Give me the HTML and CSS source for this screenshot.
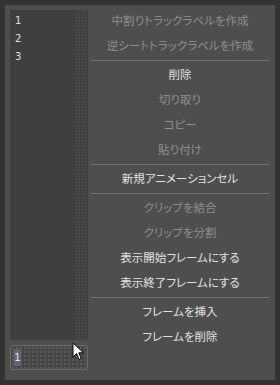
FILE: index.html
```html
<!DOCTYPE html>
<html>
<head>
    <title>Context menu</title>
    <link rel="stylesheet" href="styles.css">
</head>
<body>
    <div class="menu">
        <div class="side">
            <div class="list">
                <div class="rows">
                    <div class="row">1</div>
                    <div class="row">2</div>
                    <div class="row">3</div>
                </div>
                <div class="scroll"></div>
            </div>
            <div class="field">
                <span class="field-val">1</span>
            </div>
        </div>

        <div class="items">
            <div class="item off">中割りトラックラベルを作成</div>
            <div class="item off">逆シートトラックラベルを作成</div>
            <div class="sep"></div>
            <div class="item">削除</div>
            <div class="item off">切り取り</div>
            <div class="item off">コピー</div>
            <div class="item off">貼り付け</div>
            <div class="sep"></div>
            <div class="item">新規アニメーションセル</div>
            <div class="sep"></div>
            <div class="item off">クリップを結合</div>
            <div class="item off">クリップを分割</div>
            <div class="item">表示開始フレームにする</div>
            <div class="item">表示終了フレームにする</div>
            <div class="sep"></div>
            <div class="item">フレームを挿入</div>
            <div class="item">フレームを削除</div>
        </div>

        <!-- mouse pointer -->
        <svg class="cursor" width="14" height="20" viewBox="0 0 14 20">
            <path d="M1 1 L1 15 L4.5 11.5 L7 17.5 L9.2 16.6 L6.8 10.8 L11.5 10.8 Z" fill="#fff" stroke="#000" stroke-width="1"/>
        </svg>
    </div>
</body>
</html>
```

FILE: styles.css
```css
body {
    margin: 0;
    background: #333333;
    font-family: "Noto Sans CJK JP", "DejaVu Sans", sans-serif;
}
.menu {
    position: relative;
    display: flex;
    margin: 5px 0 0 5px;
    width: 270px;
    height: 375px;
    box-sizing: border-box;
    padding: 5px 6px 10px 5px;
    background: #4e4e4e;
}
.side {
    width: 78px;
    display: flex;
    flex-direction: column;
    gap: 5px;
}
.list {
    flex: 1;
    display: flex;
    background: #3f3f3f;
}
.rows {
    flex: 1;
    padding: 2px 0 0 5px;
}
.row {
    height: 18px;
    line-height: 18px;
    font-family: "DejaVu Sans", sans-serif;
    font-size: 10px;
    color: #e0e0e0;
}
.scroll {
    width: 13px;
    background-color: #414141;
    background-image: radial-gradient(circle, #585858 0.8px, transparent 1px);
    background-size: 3px 3px;
}
.field {
    display: flex;
    align-items: center;
    height: 25px;
    box-sizing: border-box;
    border: 1px solid #6c6c6c;
    border-radius: 2px;
    padding: 0 3px;
    background-color: #474747;
    background-image: radial-gradient(circle, #5c5c5c 0.8px, transparent 1px);
    background-size: 4px 4px;
}
.field-val {
    width: 7px;
    height: 17px;
    line-height: 17px;
    text-align: center;
    font-family: "DejaVu Sans", sans-serif;
    font-size: 10px;
    color: #e8e8e8;
    background: #5d6472;
}
.items {
    flex: 1;
    margin: -2px 0 0 3px;
}
.item {
    height: 25px;
    line-height: 25px;
    text-align: center;
    font-size: 11.5px;
    font-feature-settings: "palt";
    color: #e2e2e2;
    white-space: nowrap;
}
.item.off {
    color: #8e8e8e;
}
.sep {
    height: 4px;
    position: relative;
}
.sep::after {
    content: "";
    position: absolute;
    left: 0;
    right: 0;
    top: 2px;
    border-top: 1px solid #737373;
}
.cursor {
    position: absolute;
    left: 67px;
    top: 337px;
}
```
